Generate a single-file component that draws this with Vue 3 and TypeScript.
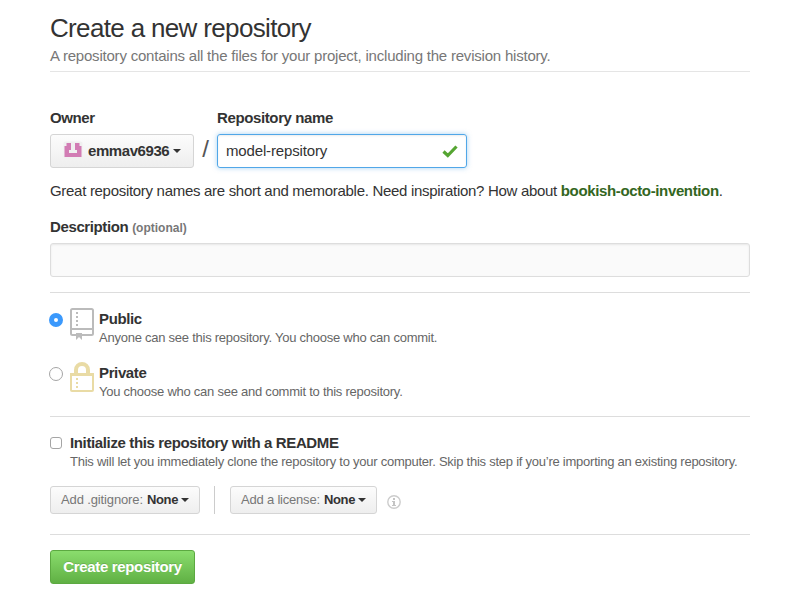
<script setup lang="ts">
import { ref } from 'vue'

type Visibility = 'public' | 'private'

interface VisibilityOption {
  id: Visibility
  title: string
  note: string
}

interface InitMenu {
  label: string
  value: string
  kind: string
}

const options: VisibilityOption[] = [
  { id: 'public', title: 'Public', note: 'Anyone can see this repository. You choose who can commit.' },
  { id: 'private', title: 'Private', note: 'You choose who can see and commit to this repository.' },
]

const menus: InitMenu[] = [
  { label: 'Add .gitignore:', value: 'None', kind: 'gitignore' },
  { label: 'Add a license:', value: 'None', kind: 'license' },
]

const owner = 'emmav6936'
const name = ref('model-repsitory')
const description = ref('')
const visibility = ref<Visibility>('public')
const withReadme = ref(false)
</script>

<template>
  <main class="page">
    <header class="head">
      <h1 class="title">Create a new repository</h1>
      <p class="lead">A repository contains all the files for your project, including the revision history.</p>
    </header>

    <form @submit.prevent>
      <section class="naming">
        <div class="field">
          <label class="label">Owner</label>
          <button type="button" class="btn owner-btn">
            <svg class="avatar" width="20" height="20" viewBox="0 0 20 20">
              <rect x="0.500" y="0.500" width="19" height="17" rx="2" fill="#f0f0f0" />
              <path d="M3.500 2H8v7H6v3h8V9h-2V2h4.500v3h2v11h-17V5h2z" fill="#d27cb4" />
            </svg>
            <span class="owner-name">{{ owner }}</span>
            <i class="caret"></i>
          </button>
        </div>
        <span class="slash">/</span>
        <div class="field">
          <label class="label" for="repo-name">Repository name</label>
          <div class="name-box">
            <input id="repo-name" v-model="name" class="name-input" type="text" spellcheck="false" />
            <svg class="check" width="16" height="13" viewBox="0 0 16 13">
              <path d="M1.500 6.500 5.800 10.500 14.500 1.500" fill="none" stroke="#55a532" stroke-width="3.200" />
            </svg>
          </div>
        </div>
      </section>

      <p class="hint">Great repository names are short and memorable. Need inspiration? How about <strong>bookish-octo-invention</strong>.</p>

      <label class="label desc-label" for="repo-desc">Description <small>(optional)</small></label>
      <input id="repo-desc" v-model="description" class="desc-input" type="text" />

      <section class="visibility">
        <label v-for="o in options" :key="o.id" class="option">
          <input v-model="visibility" class="radio" type="radio" name="visibility" :value="o.id" />
          <svg v-if="o.id === 'public'" class="icon" width="24" height="32" viewBox="0 0 24 32">
            <g fill="none" stroke="#bbb" stroke-width="2">
              <path d="M6 27H2.500Q1 27 1 25.500V2.500Q1 1 2.500 1h19Q23 1 23 2.500v23Q23 27 21.500 27H12" />
              <path d="M1 21h22" />
            </g>
            <path d="M6 4h2v2H6zM6 8h2v2H6zM6 12h2v2H6zM6 16h2v2H6zM6 25h6v7l-3-3-3 3z" fill="#bbb" />
          </svg>
          <svg v-else class="icon" width="24" height="32" viewBox="0 0 24 32">
            <path d="M6 12V8a6 6 0 0 1 12 0V12" fill="none" stroke="#e9dba5" stroke-width="4" />
            <rect x="1" y="12" width="22" height="17" rx="1" fill="#fff" stroke="#e9dba5" stroke-width="2" />
            <path d="M0 11h24v3H0zM6 16h2v2H6zM6 20h2v2H6zM6 24h2v2H6z" fill="#e9dba5" />
          </svg>
          <span class="option-text">
            <b class="option-title">{{ o.title }}</b>
            <span class="note">{{ o.note }}</span>
          </span>
        </label>
      </section>

      <section class="init">
        <label class="readme">
          <input v-model="withReadme" class="checkbox" type="checkbox" />
          <span class="option-text">
            <b class="option-title">Initialize this repository with a README</b>
            <span class="note">This will let you immediately clone the repository to your computer. Skip this step if you’re importing an existing repository.</span>
          </span>
        </label>
        <div class="menus">
          <template v-for="(m, i) in menus" :key="m.kind">
            <span v-if="i > 0" class="divider"></span>
            <button type="button" class="btn small-btn" :class="m.kind">
              <span class="menu-label">{{ m.label }}</span>
              <span class="menu-value">{{ m.value }}</span>
              <i class="caret"></i>
            </button>
          </template>
          <svg class="info" width="14" height="14" viewBox="0 0 14 14">
            <circle cx="7" cy="7" r="6.200" fill="none" stroke="#ccc" stroke-width="1.400" />
            <path d="M6 3h2v2H6zM5 6h3v4h1v1H5v-1h1V7H5z" fill="#c4c4c4" />
          </svg>
        </div>
      </section>

      <button type="submit" class="submit">Create repository</button>
    </form>
  </main>
</template>

<style>
body {
  background: #fff;
}
</style>

<style scoped>
* {
  box-sizing: border-box;
}

.page {
  width: 700px;
  margin-left: 50px;
  padding-top: 10px;
  color: #333;
  font: 15px/20px "Liberation Sans", Arial, sans-serif;
  white-space: nowrap;
}

h1,
p {
  margin: 0;
}

button,
input {
  font: inherit;
  color: inherit;
}

.head {
  height: 62px;
  border-bottom: 1px solid #e5e5e5;
}

.title {
  font-size: 26px;
  font-weight: 400;
  line-height: 36px;
  letter-spacing: -0.66px;
}

.lead {
  color: #777;
  letter-spacing: -0.21px;
}

.naming {
  display: flex;
  padding-top: 36px;
}

.label {
  display: block;
  height: 26px;
  font-weight: 700;
  letter-spacing: -0.38px;
}

.btn {
  display: flex;
  align-items: center;
  border: 1px solid #d5d5d5;
  border-radius: 3px;
  background: linear-gradient(#fcfcfc, #eee);
}

.owner-btn {
  width: 144px;
  height: 34px;
  padding: 0 0 0 12px;
  font-weight: 700;
  letter-spacing: -0.42px;
}

.avatar {
  margin-right: 5px;
}

.caret {
  width: 0;
  height: 0;
  margin-left: 4px;
  border: 4px solid transparent;
  border-top-color: #333;
  border-bottom: 0;
}

.slash {
  width: 23px;
  padding-top: 31px;
  color: #555;
  font-size: 24px;
  text-align: center;
}

.name-box {
  display: flex;
  align-items: center;
  width: 250px;
  height: 34px;
  padding: 0 8px;
  border: 1px solid #51a7e8;
  border-radius: 3px;
  box-shadow: inset 0 1px 2px rgba(0, 0, 0, 0.075), 0 0 5px rgba(81, 167, 232, 0.5);
}

.name-input {
  flex: 1;
  min-width: 0;
  padding: 0;
  border: 0;
  outline: 0;
  background: none;
  letter-spacing: -0.15px;
}

.hint {
  padding-top: 13px;
  letter-spacing: -0.3px;
}

.hint strong {
  color: #336622;
  letter-spacing: -0.36px;
}

.desc-label {
  margin-top: 16px;
}

.desc-label small {
  color: #777;
  font-size: 12px;
  letter-spacing: 0;
}

.desc-input {
  display: block;
  width: 700px;
  height: 34px;
  padding: 0 8px;
  border: 1px solid #ddd;
  border-radius: 3px;
  outline: 0;
  background: #fafafa;
  box-shadow: inset 0 1px 2px rgba(0, 0, 0, 0.075);
}

.visibility {
  height: 124px;
  margin-top: 15px;
  padding-top: 15px;
  border-top: 1px solid #ddd;
}

.option {
  display: flex;
  height: 54px;
}

.radio {
  appearance: none;
  flex: none;
  width: 14px;
  height: 14px;
  margin: 5px 7px 0 -1px;
  border: 1px solid #a5a5a5;
  border-radius: 50%;
  background: #fff;
}

.radio:checked {
  border: 5px solid #3b99fc;
}

.icon {
  flex: none;
  margin-right: 5px;
}

.option-text {
  display: block;
}

.option-title {
  display: block;
  height: 20px;
  margin-top: 1px;
  letter-spacing: -0.37px;
}

.note {
  display: block;
  color: #666;
  font-size: 13px;
  line-height: 18px;
  letter-spacing: -0.245px;
}

.init {
  height: 119px;
  padding-top: 15px;
  border: solid #ddd;
  border-width: 1px 0;
}

.readme {
  display: flex;
  height: 54px;
}

.checkbox {
  appearance: none;
  flex: none;
  width: 12px;
  height: 12px;
  margin: 5px 8px 0 0;
  border: 1px solid #a5a5a5;
  border-radius: 3px;
  background: #fff;
}

.menus {
  display: flex;
  align-items: center;
  height: 28px;
}

.small-btn {
  height: 28px;
  padding: 0 0 0 10px;
  font-size: 13px;
}

.menu-label {
  margin-right: 4px;
  color: #777;
  letter-spacing: -0.13px;
}

.menu-value {
  font-weight: 700;
  letter-spacing: -0.3px;
}

.small-btn .caret {
  margin-left: 3px;
}

.gitignore {
  width: 150px;
}

.license {
  width: 147px;
}

.license .menu-label {
  letter-spacing: -0.2px;
}

.divider {
  width: 1px;
  height: 28px;
  margin: 0 15px 0 14px;
  background: #ccc;
}

.info {
  margin: 4px 0 0 10px;
}

.submit {
  display: block;
  width: 145px;
  height: 34px;
  margin-top: 15px;
  padding: 0;
  border: 1px solid #5ca941;
  border-radius: 3px;
  background: linear-gradient(#8add6d, #60b044);
  color: #fff;
  font-weight: 700;
  letter-spacing: -0.33px;
  text-shadow: 0 -1px 0 rgba(0, 0, 0, 0.15);
}
</style>
